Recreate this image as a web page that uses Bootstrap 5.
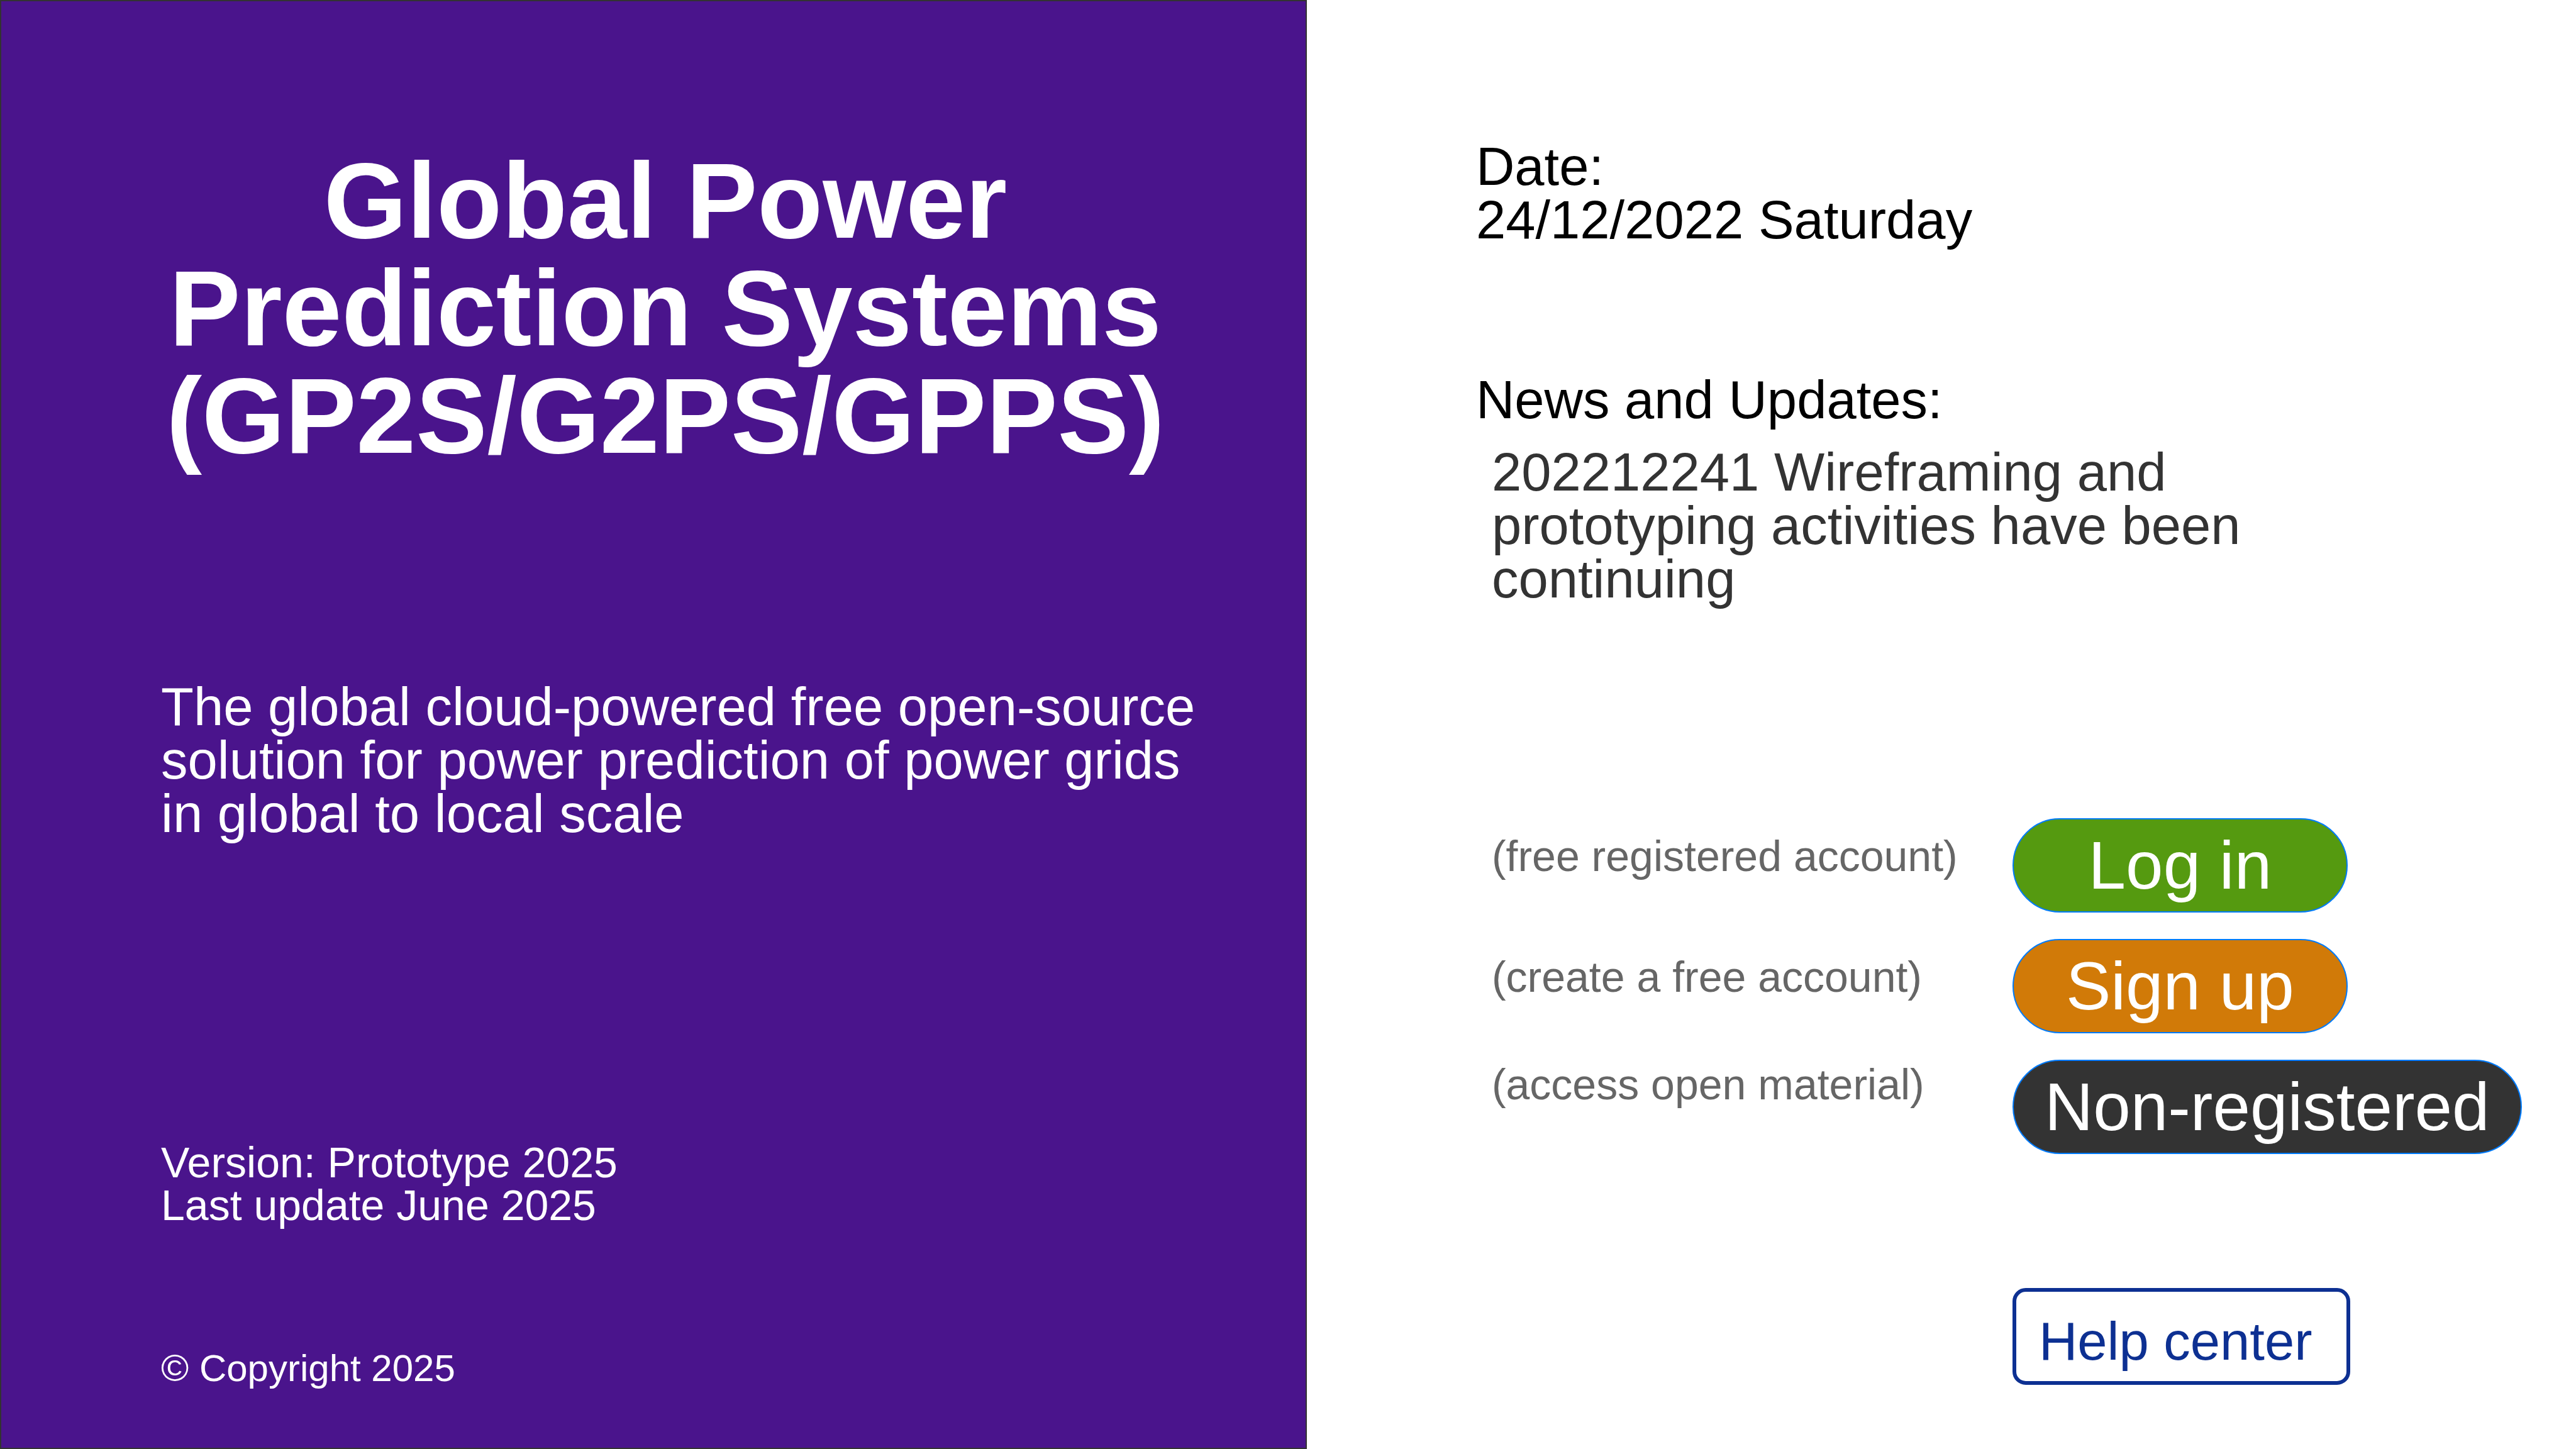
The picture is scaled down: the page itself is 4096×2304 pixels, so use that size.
<!DOCTYPE html>
<html lang="en">
<head>
<meta charset="utf-8">
<meta name="viewport" content="width=device-width, initial-scale=1">
<title>Global Power Prediction Systems</title>
<link rel="stylesheet" href="https://cdn.jsdelivr.net/npm/bootstrap@5.3.0/dist/css/bootstrap.min.css">
<style>
  :root { --label-col: 828px; --indent: 25px; }
  body { font-family: "Liberation Sans", Arial, sans-serif; font-size: 85px; line-height: 85px; color: #000; }
  .brand-panel { flex: 0 0 50.73%; background: #4a148c; border: 2px solid #333; padding: 232px 144px 96px 254px; }
  .brand-title { font-size: 170px; line-height: 171px; max-width: 1604px; margin-bottom: 334px; }
  .brand-intro { margin-bottom: 478px; }
  .text-note { font-size: 68px; line-height: 68px; }
  .text-legal { font-size: 60px; line-height: 60px; }
  .info-panel { padding: 222px 86px 102px 269px; }
  .date-block { margin-bottom: 201px; }
  .news-block { margin-bottom: 338px; }
  .news-title { font-size: 85px; line-height: 85px; margin-bottom: 30px; }
  .news-item { color: #333; max-width: 1300px; padding-left: var(--indent); }
  .actions { display: grid; grid-template-columns: var(--label-col) auto; row-gap: 42px; padding-left: var(--indent); }
  .action-note { color: #666; padding-top: 26px; }
  .action-note-high { padding-top: 5px; }
  .btn-action { min-width: 533px; font-size: 107px; line-height: 107px; padding: 20px 49px 19px; border: 2px solid #007bff; color: #fff; }
  .btn-login { background: #559a10; }
  .btn-signup { background: #d17a08; }
  .btn-guest { background: #333; }
  .btn-help { width: 537px; font-size: 85px; line-height: 85px; padding: 36px 36px 21px 36px; border: 6px solid #0d3092; border-radius: 21px; color: #0d3092; background: #fff; margin-left: calc(var(--indent) + var(--label-col)); }
</style>
</head>
<body>
<div class="d-flex min-vh-100">
  <header class="brand-panel d-flex flex-column text-white">
    <h1 class="brand-title fw-bold text-center">Global Power Prediction Systems (GP2S/G2PS/GPPS)</h1>
    <p class="brand-intro">The global cloud-powered free open-source solution for power prediction of power grids in global to local scale</p>
    <p class="text-note mb-0">Version: Prototype 2025<br>Last update June 2025</p>
    <p class="text-legal mt-auto mb-0">© Copyright 2025</p>
  </header>
  <main class="info-panel flex-fill d-flex flex-column">
    <p class="date-block">Date:<br>24/12/2022 Saturday</p>
    <section class="news-block">
      <h2 class="news-title fw-normal">News and Updates:</h2>
      <p class="news-item mb-0">202212241 Wireframing and prototyping activities have been continuing</p>
    </section>
    <div class="actions">
      <span id="note-login" class="action-note text-note">(free registered account)</span>
      <div class="d-flex"><button type="button" class="btn btn-action btn-login rounded-pill text-nowrap" aria-describedby="note-login">Log in</button></div>
      <span id="note-signup" class="action-note text-note">(create a free account)</span>
      <div class="d-flex"><button type="button" class="btn btn-action btn-signup rounded-pill text-nowrap" aria-describedby="note-signup">Sign up</button></div>
      <span id="note-guest" class="action-note action-note-high text-note">(access open material)</span>
      <div class="d-flex"><button type="button" class="btn btn-action btn-guest rounded-pill text-nowrap" aria-describedby="note-guest">Non-registered</button></div>
    </div>
    <button type="button" class="btn btn-help text-start mt-auto">Help center</button>
  </main>
</div>
<script src="https://cdn.jsdelivr.net/npm/bootstrap@5.3.0/dist/js/bootstrap.bundle.min.js"></script>
</body>
</html>
